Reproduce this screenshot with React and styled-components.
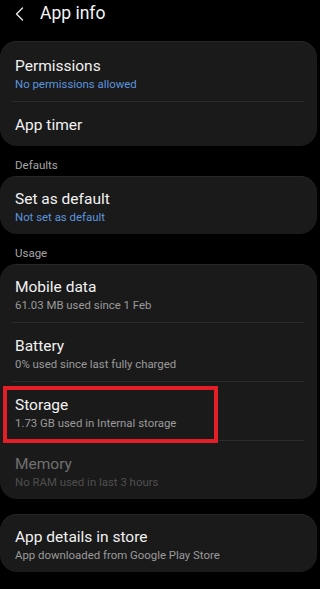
import React from 'react';
import styled, { createGlobalStyle } from 'styled-components';

const GlobalStyle = createGlobalStyle`
  html, body {
    margin: 0;
    padding: 0;
    background: #000;
  }
  body {
    font-family: Roboto, "Noto Sans", sans-serif;
    -webkit-font-smoothing: antialiased;
  }
`;

const Screen = styled.div`
  width: 320px;
  height: 589px;
  background: #000;
  overflow: hidden;
`;

const Header = styled.div`
  height: 26px;
  display: flex;
  align-items: center;
  padding-left: 15px;
  margin-bottom: 15px;
`;

const BackButton = styled.svg`
  width: 10px;
  height: 14px;
  margin-right: 15px;
  margin-top: 1px;
`;

const HeaderTitle = styled.h1`
  margin: 0;
  font-size: 17.5px;
  font-weight: 400;
  color: #f4f4f4;
  line-height: 22px;
`;

const Card = styled.div`
  background: #1a1a1a;
  border-radius: 17px;
  margin-right: 3px;
  box-shadow: inset 0 1px 0 #262626;
`;

const SectionLabel = styled.div`
  padding: 12px 15px 4px;
  font-size: 11.5px;
  line-height: 14px;
  color: #a6a6a6;
`;

const Gap = styled.div`
  height: 15px;
`;

const Row = styled.div`
  position: relative;
  padding: ${(p) => (p.$single ? '13px 15px 11px' : '13px 15px 9px')};
  padding-top: ${(p) => (p.$first ? '15px' : undefined)};
`;

const Title = styled.div`
  font-size: 15.5px;
  line-height: 20px;
  color: ${(p) => (p.$dim ? '#707070' : '#f2f2f2')};
`;

const Subtitle = styled.div`
  font-size: 11.4px;
  line-height: 16px;
  color: ${(p) => (p.$blue ? '#5b95de' : p.$dim ? '#4f4f4f' : '#9b9b9b')};
`;

const Divider = styled.div`
  height: 1px;
  background: #2c2c2c;
  margin: 0 13px 0 12px;
`;

const Highlight = styled.div`
  position: absolute;
  left: 3px;
  top: 4px;
  width: 207px;
  height: 49px;
  border: 4px solid #e31e26;
  pointer-events: none;
`;

function Item({ title, sub, blue, dim, single, first, highlight }) {
  return (
    <Row $single={single} $first={first}>
      <Title $dim={dim}>{title}</Title>
      {sub && (
        <Subtitle $blue={blue} $dim={dim}>
          {sub}
        </Subtitle>
      )}
      {highlight && <Highlight />}
    </Row>
  );
}

export default function App() {
  return (
    <>
      <GlobalStyle />
      <Screen>
        <Header>
          <BackButton viewBox="0 0 10 14">
            <polyline
              points="7.5,1 1.5,7 7.5,13"
              fill="none"
              stroke="#e8e8e8"
              strokeWidth="1.4"
              strokeLinecap="round"
              strokeLinejoin="round"
            />
          </BackButton>
          <HeaderTitle>App info</HeaderTitle>
        </Header>

        <Card>
          <Item title="Permissions" sub="No permissions allowed" blue first />
          <Divider />
          <Item title="App timer" single />
        </Card>

        <SectionLabel>Defaults</SectionLabel>
        <Card>
          <Item title="Set as default" sub="Not set as default" blue />
        </Card>

        <SectionLabel>Usage</SectionLabel>
        <Card>
          <Item title="Mobile data" sub="61.03 MB used since 1 Feb" />
          <Divider />
          <Item title="Battery" sub="0% used since last fully charged" />
          <Divider />
          <Item title="Storage" sub="1.73 GB used in Internal storage" highlight />
          <Divider />
          <Item title="Memory" sub="No RAM used in last 3 hours" dim />
        </Card>

        <Gap />
        <Card>
          <Item title="App details in store" sub="App downloaded from Google Play Store" />
        </Card>
      </Screen>
    </>
  );
}
